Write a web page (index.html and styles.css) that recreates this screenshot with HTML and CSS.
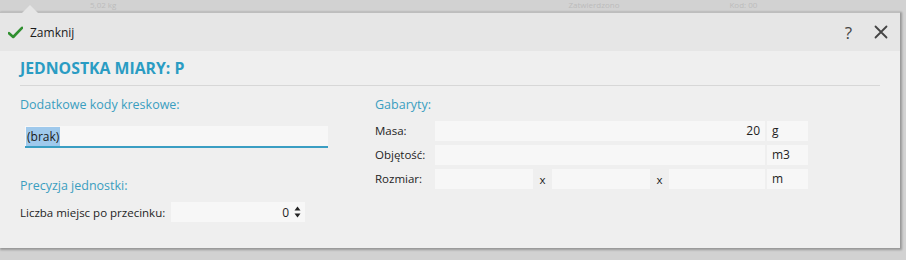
FILE: index.html
```html
<!DOCTYPE html>
<html lang="pl">
<head>
<meta charset="utf-8">
<link rel="stylesheet" href="styles.css">
</head>
<body>
<div class="backdrop">
  <span class="bg-t1">5,02 kg</span>
  <span class="bg-t2">Zatwierdzono</span>
  <span class="bg-t3">Kod: 00</span>
</div>
<div class="pointer"></div>
<div class="dialog">
  <div class="header">
    <div class="close-btn">
      <svg class="check" width="15" height="13" viewBox="0 0 15 13"><path d="M1 7.2 L5.2 11 L14 1.8" fill="none" stroke="#2f8f2f" stroke-width="2.6" stroke-linecap="round" stroke-linejoin="round"/></svg>
      <span>Zamknij</span>
    </div>
    <div class="header-actions">
      <span class="help">?</span>
      <svg class="x" width="14" height="14" viewBox="0 0 14 14"><path d="M1.5 1.5 L12.5 12.5 M12.5 1.5 L1.5 12.5" stroke="#444" stroke-width="1.8" stroke-linecap="round"/></svg>
    </div>
  </div>
  <div class="content">
    <h1 class="title">JEDNOSTKA MIARY: P</h1>
    <div class="columns">
      <div class="col-left">
        <div class="section-label">Dodatkowe kody kreskowe:</div>
        <div class="barcode-input"><span class="sel">(brak)</span></div>
        <div class="section-label prec">Precyzja jednostki:</div>
        <div class="row">
          <span class="lbl">Liczba miejsc po przecinku:</span>
          <div class="spin">
            <span class="val">0</span>
            <svg width="7" height="12" viewBox="0 0 7 12"><path d="M3.5 0.5 L6.5 4.5 L0.5 4.5 Z M3.5 11.5 L6.5 7.5 L0.5 7.5 Z" fill="#222"/></svg>
          </div>
        </div>
      </div>
      <div class="col-right">
        <div class="section-label">Gabaryty:</div>
        <div class="grid">
          <span class="glbl">Masa:</span>
          <div class="field wide num">20</div>
          <div class="unit">g</div>
          <span class="glbl">Objętość:</span>
          <div class="field wide"></div>
          <div class="unit">m3</div>
          <span class="glbl">Rozmiar:</span>
          <div class="dims">
            <div class="field"></div>
            <span class="times">x</span>
            <div class="field"></div>
            <span class="times">x</span>
            <div class="field"></div>
          </div>
          <div class="unit">m</div>
        </div>
      </div>
    </div>
  </div>
</div>
</body>
</html>
```

FILE: styles.css
```css
* { box-sizing: border-box; }
html, body { margin: 0; padding: 0; }
body {
  width: 906px;
  height: 260px;
  overflow: hidden;
  background: #d2d2d2;
  font-family: "Open Sans", "Noto Sans", sans-serif;
  font-size: 11.5px;
  color: #1e1e1e;
  position: relative;
}
.backdrop {
  height: 12px;
  display: flex;
  align-items: flex-start;
  color: #bcbcbc;
  font-size: 8px;
  line-height: 9px;
}
.bg-t1 { margin-left: 90px; }
.bg-t2 { margin-left: 452px; }
.bg-t3 { margin-left: 110px; }
.pointer {
  position: absolute;
  left: 22px;
  top: 5px;
  width: 0; height: 0;
  border-left: 8px solid transparent;
  border-right: 8px solid transparent;
  border-bottom: 8px solid #e6e6e6;
}
.dialog {
  width: 900px;
  height: 236px;
  background: #efefef;
  box-shadow: 1px 1px 2px 1px rgba(0,0,0,0.28);
  border-top: 1px solid #bdbdbd;
}
.header {
  height: 38px;
  background: #e6e6e6;
  display: flex;
  align-items: center;
  justify-content: space-between;
  padding: 0 12px 0 8px;
}
.close-btn {
  display: flex;
  align-items: center;
  gap: 7px;
  font-size: 12px;
  color: #1a1a1a;
}
.check { margin-top: 1px; }
.header-actions {
  display: flex;
  align-items: center;
  gap: 21px;
}
.help {
  font-size: 17px;
  color: #444;
  line-height: 1;
  margin-right: 1px;
}
.content {
  padding: 0 20px 0 20px;
}
.title {
  margin: 0;
  padding-top: 8px;
  padding-bottom: 8px;
  font-size: 15.8px;
  font-weight: 700;
  color: #2a9cc3;
  line-height: 18px;
  border-bottom: 1px solid #d7d7d7;
}
.columns {
  display: flex;
  padding-top: 10px;
}
.col-left {
  width: 355px;
}
.section-label {
  color: #3a9ec0;
  font-size: 12.5px;
  line-height: 18px;
}
.barcode-input {
  margin: 12px 0 0 5px;
  width: 303px;
  height: 22px;
  background: #f7f7f7;
  border-bottom: 2px solid #3a9ec3;
  padding: 2px 0 0 1px;
}
.sel {
  background: #9fc9ec;
  padding: 1px 1px;
  color: #1a1a1a;
  font-size: 12px;
}
.prec { margin-top: 29px; }
.row {
  display: flex;
  align-items: center;
  margin-top: 7px;
}
.lbl { width: 151px; }
.spin {
  width: 134px;
  height: 20px;
  background: #f7f7f7;
  display: flex;
  align-items: center;
  justify-content: flex-end;
  gap: 5px;
  padding-right: 4px;
}
.val { font-size: 12px; }
.grid {
  display: grid;
  grid-template-columns: 58px 330px 41px;
  column-gap: 2px;
  row-gap: 4px;
  margin-top: 7px;
  align-items: center;
}
.glbl { line-height: 20px; }
.field {
  height: 20px;
  background: #f7f7f7;
  line-height: 20px;
}
.num { text-align: right; padding-right: 5px; font-size: 12px; }
.unit {
  height: 20px;
  background: #f7f7f7;
  line-height: 20px;
  padding-left: 5px;
  font-size: 12px;
}
.dims {
  display: grid;
  grid-template-columns: 98px 19px 98px 19px 96px;
  align-items: center;
}
.times { text-align: center; }
```
